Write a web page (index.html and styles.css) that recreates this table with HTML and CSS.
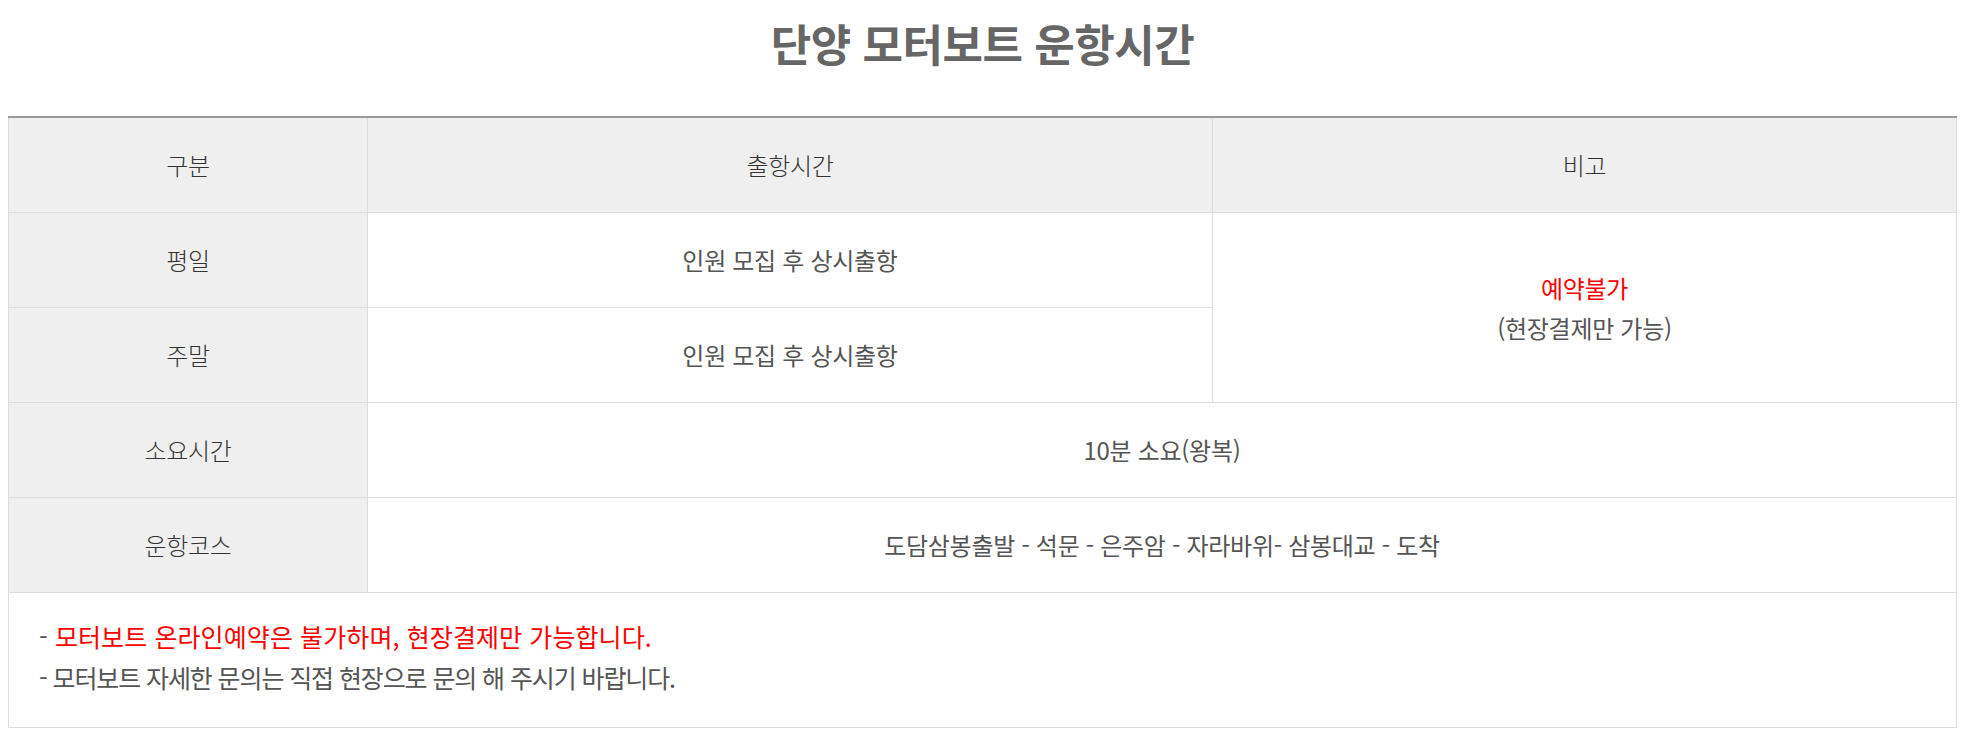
FILE: index.html
```html
<!DOCTYPE html>
<html lang="ko">
<head>
<meta charset="utf-8">
<title>단양 모터보트 운항시간</title>
<link rel="stylesheet" href="styles.css">
</head>
<body>
<div class="page">
  <h2 class="title">단양 모터보트 운항시간</h2>
  <table class="schedule">
    <colgroup>
      <col class="c1">
      <col class="c2">
      <col class="c3">
    </colgroup>
    <tr class="head">
      <th>구분</th>
      <th>출항시간</th>
      <th>비고</th>
    </tr>
    <tr>
      <th>평일</th>
      <td>인원 모집 후 상시출항</td>
      <td rowspan="2" class="note"><span class="red">예약불가</span><br>(현장결제만 가능)</td>
    </tr>
    <tr>
      <th>주말</th>
      <td>인원 모집 후 상시출항</td>
    </tr>
    <tr>
      <th>소요시간</th>
      <td colspan="2">10분 소요(왕복)</td>
    </tr>
    <tr>
      <th>운항코스</th>
      <td colspan="2">도담삼봉출발 - 석문 - 은주암 - 자라바위- 삼봉대교 - 도착</td>
    </tr>
    <tr>
      <td colspan="3" class="info">
        <p class="line1">- <span class="red">모터보트 온라인예약은 불가하며, 현장결제만 가능합니다.</span></p>
        <p class="line2">- 모터보트 자세한 문의는 직접 현장으로 문의 해 주시기 바랍니다.</p>
      </td>
    </tr>
  </table>
</div>
</body>
</html>
```

FILE: styles.css
```css
html, body {
  margin: 0;
  padding: 0;
  background: #fff;
}
body {
  margin: 8px;
  font-family: "Noto Sans CJK KR", "Noto Sans", sans-serif;
  color: #555;
}
.page {
  display: flex;
  flex-direction: column;
}
.title {
  margin: 0 0 38px;
  height: 70px;
  line-height: 70px;
  text-align: center;
  font-size: 44px;
  font-weight: 700;
  color: #666;
  letter-spacing: -0.5px;
}
.schedule {
  width: 100%;
  border-collapse: collapse;
  border-top: 2px solid #999;
  font-size: 24px;
  letter-spacing: -0.3px;
}
.c1 { width: 359px; }
.c2 { width: 845px; }
.schedule th,
.schedule td {
  border: 1px solid #ddd;
  height: 94px;
  padding: 0;
  text-align: center;
  vertical-align: middle;
  line-height: 40px;
}
.schedule th {
  background: #efefef;
  font-weight: 300;
  color: #333;
}
.schedule td {
  font-weight: 400;
  color: #555;
}
.red {
  color: #ff0000;
}
.schedule td.info {
  text-align: left;
  padding: 23px 30px 29px;
  height: auto;
  font-size: 25px;
}
.info p {
  margin: 0;
  line-height: 41px;
}
.info .line1 {
  letter-spacing: 0.1px;
}
.info .line2 {
  letter-spacing: -1.1px;
}
```
